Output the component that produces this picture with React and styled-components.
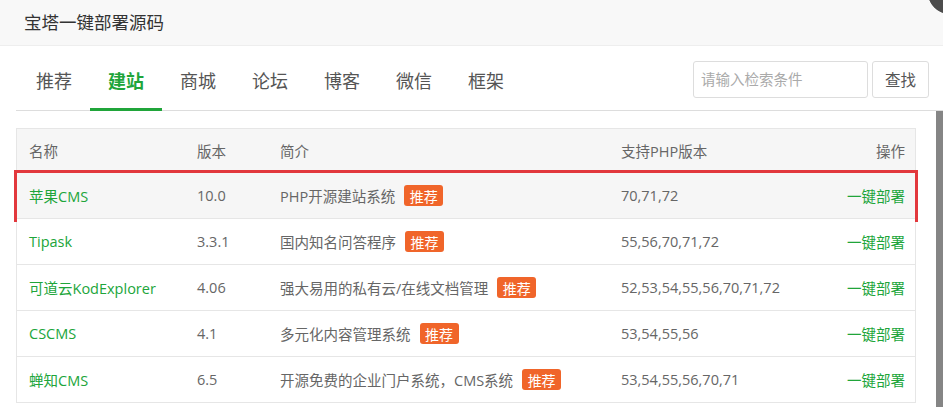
import React from "react";
import styled, { createGlobalStyle } from "styled-components";

const GlobalStyle = createGlobalStyle`
  html, body {
    margin: 0;
    padding: 0;
    background: #fff;
    overflow: hidden;
  }
  body {
    font-family: "Open Sans", "Noto Sans CJK SC", sans-serif;
    color: #666;
  }
`;

const tabs = ["推荐", "建站", "商城", "论坛", "博客", "微信", "框架"];

const rows = [
  { name: "苹果CMS", ver: "10.0", desc: "PHP开源建站系统", php: "70,71,72" },
  { name: "Tipask", ver: "3.3.1", desc: "国内知名问答程序", php: "55,56,70,71,72" },
  { name: "可道云KodExplorer", ver: "4.06", desc: "强大易用的私有云/在线文档管理", php: "52,53,54,55,56,70,71,72" },
  { name: "CSCMS", ver: "4.1", desc: "多元化内容管理系统", php: "53,54,55,56" },
  { name: "蝉知CMS", ver: "6.5", desc: "开源免费的企业门户系统，CMS系统", php: "53,54,55,56,70,71" },
];

export default function App() {
  return (
    <>
      <GlobalStyle />
      <Layer>
        <Title>
          <span>宝塔一键部署源码</span>
          <CloseBtn />
        </Title>
        <TabBar>
          <TabList>
            {tabs.map((t) => (
              <Tab key={t} $active={t === "建站"}>
                {t}
              </Tab>
            ))}
          </TabList>
          <Search>
            <SearchInput placeholder="请输入检索条件" />
            <SearchButton>查找</SearchButton>
          </Search>
        </TabBar>
        <ScrollWrap>
          <Scroll>
            <Table>
              <HeadRow>
                <Cell>名称</Cell>
                <Cell>版本</Cell>
                <Cell>简介</Cell>
                <Cell>支持PHP版本</Cell>
                <Cell $right>操作</Cell>
              </HeadRow>
              {rows.map((r, i) => (
                <Row key={r.name} $marked={i === 0}>
                  <Cell $green>{r.name}</Cell>
                  <Cell>{r.ver}</Cell>
                  <Cell>
                    {r.desc}
                    <Badge>推荐</Badge>
                  </Cell>
                  <Cell>{r.php}</Cell>
                  <Cell $right $green>
                    一键部署
                  </Cell>
                </Row>
              ))}
            </Table>
          </Scroll>
          <ScrollTrack>
            <ScrollThumb />
          </ScrollTrack>
        </ScrollWrap>
      </Layer>
    </>
  );
}

const Layer = styled.div`
  width: 943px;
  height: 407px;
  overflow: hidden;
  background: #fff;
`;

const Title = styled.div`
  display: flex;
  justify-content: space-between;
  align-items: flex-start;
  height: 45px;
  line-height: 45px;
  padding-left: 24px;
  background: radial-gradient(circle at 950px -8px, #4d4d4d 21.5px, transparent 22.5px), #f8f8f8;
  border-bottom: 1px solid #eee;
  font-size: 17.5px;
  color: #333;
`;

const CloseBtn = styled.div`
  flex: none;
  width: 44px;
  height: 44px;
  margin: -30px -29px 0 0;
  border-radius: 50%;
  background: #4d4d4d;
`;

const TabBar = styled.div`
  display: flex;
  justify-content: space-between;
  align-items: center;
  height: 64px;
  margin-left: 16px;
  padding-right: 14px;
  border-bottom: 1px solid #ddd;
`;

const TabList = styled.ul`
  display: flex;
  list-style: none;
  margin: 0;
  padding: 0 0 0 2px;
  height: 100%;
`;

const Tab = styled.li`
  box-sizing: border-box;
  display: flex;
  align-items: center;
  height: calc(100% + 1px);
  margin-bottom: -1px;
  padding: 5px 18px 0;
  font-size: 18px;
  color: ${(p) => (p.$active ? "#20a53a" : "#555")};
  font-weight: ${(p) => (p.$active ? "bold" : "normal")};
  border-bottom: 3px solid ${(p) => (p.$active ? "#20a53a" : "transparent")};
  cursor: pointer;
`;

const Search = styled.div`
  display: flex;
  gap: 4px;
  padding-top: 3px;
`;

const SearchInput = styled.input`
  box-sizing: border-box;
  width: 175px;
  height: 37px;
  padding: 0 7px;
  border: 1px solid #ddd;
  border-radius: 3px;
  font-family: inherit;
  font-size: 14.5px;
  color: #555;
  outline: none;

  &::placeholder {
    color: #aaa;
  }
`;

const SearchButton = styled.button`
  box-sizing: border-box;
  width: 57px;
  height: 37px;
  border: 1px solid #ddd;
  border-radius: 3px;
  background: #fff;
  font-family: inherit;
  font-size: 15.5px;
  color: #555;
  cursor: pointer;
`;

const ScrollWrap = styled.div`
  display: flex;
  height: 297px;
  box-shadow: inset -7px 0 0 #858585;
`;

const Scroll = styled.div`
  flex: 1;
  overflow: hidden;
  padding: 17px 20px 0 16px;
  background: #fff;
`;

const ScrollTrack = styled.div`
  flex: none;
  width: 7px;
  padding-top: 1px;
  display: flex;
  flex-direction: column;
`;

const ScrollThumb = styled.div`
  flex: 1;
  background: #858585;
  border-radius: 5px 0 0 0;
`;

const Table = styled.div`
  border: 1px solid #e6e6e6;
  border-bottom: none;
`;

const cols = "168px 83px 341px 1fr 96px";

const HeadRow = styled.div`
  display: grid;
  grid-template-columns: ${cols};
  align-items: center;
  height: 43px;
  background: #f6f6f6;
  border-bottom: 1px solid #e6e6e6;
`;

const Row = styled.div`
  display: grid;
  grid-template-columns: ${cols};
  align-items: center;
  height: 45px;
  border-bottom: 1px solid #e6e6e6;
  background: ${(p) => (p.$marked ? "#f6f6f6" : "#fff")};
  outline: ${(p) => (p.$marked ? "3px solid #e2383d" : "none")};
  position: relative;
`;

const Cell = styled.div`
  display: flex;
  align-items: center;
  justify-content: ${(p) => (p.$right ? "flex-end" : "flex-start")};
  padding: ${(p) => (p.$right ? "0 10px 0 0" : "0 0 0 12px")};
  font-size: 14.5px;
  color: ${(p) => (p.$green ? "#20a53a" : "#666")};
  white-space: nowrap;
`;

const Badge = styled.span`
  display: inline-flex;
  align-items: center;
  justify-content: center;
  width: 39px;
  height: 21px;
  margin-left: 9px;
  border-radius: 3px;
  background: #f0652a;
  color: #fff;
  font-size: 14px;
`;
